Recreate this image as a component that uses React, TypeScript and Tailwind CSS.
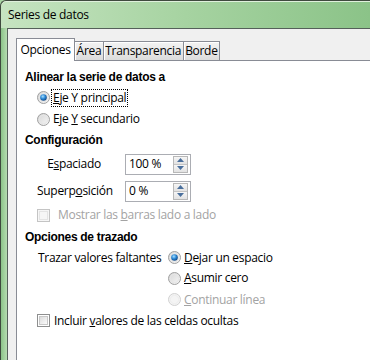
import React from 'react'

const font = { fontFamily: '"Open Sans", "Noto Sans", sans-serif' }
const bold = 'font-bold tracking-[-0.3px] font-["Liberation_Sans",Arial,sans-serif]'

function Radio ({ checked = false, disabled = false }: { checked?: boolean, disabled?: boolean }) {
  return (
    <svg width="13" height="13" viewBox="0 0 13 13" className="shrink-0">
      <defs>
        <linearGradient id="rf" x1="0" y1="0" x2="1" y2="1">
          <stop offset="0" stopColor="#d4d4d4" />
          <stop offset="1" stopColor="#f8f8f8" />
        </linearGradient>
        <radialGradient id="rd" cx="0.4" cy="0.35" r="0.7">
          <stop offset="0" stopColor="#a8e0ff" />
          <stop offset="0.5" stopColor="#2a87d5" />
          <stop offset="1" stopColor="#0f3f7a" />
        </radialGradient>
      </defs>
      <circle cx="6.5" cy="6.5" r="6" fill={disabled ? '#f4f4f4' : 'url(#rf)'} stroke={disabled ? '#d0d0d0' : '#a0a0a0'} />
      <circle cx="6.5" cy="6.5" r="4.2" fill="none" stroke={disabled ? '#eeeeee' : '#e6e6e6'} />
      {checked && <circle cx="6.5" cy="6.5" r="3.3" fill="url(#rd)" />}
    </svg>
  )
}

function Check ({ disabled = false }: { disabled?: boolean }) {
  return (
    <span className={`w-[13px] h-[13px] shrink-0 border ${disabled ? 'border-[#c4c4c4] bg-[#f6f6f6]' : 'border-[#8e8f8f] bg-white'} flex items-center justify-center`}>
      <span className={`w-[9px] h-[9px] border ${disabled ? 'border-[#e4e4e4]' : 'border-[#c8c8c8] bg-gradient-to-br from-[#dcdcdc] to-[#fbfbfb]'}`} />
    </span>
  )
}

function Spin ({ value }: { value: string }) {
  return (
    <div className="ml-[14px] w-[66px] h-[21px] border border-[#abadb3] bg-white flex items-center pl-[3px]">
      <span className="flex-1">{value}</span>
      <div className="mr-[2px] w-[15px] h-[17px] border border-[#b8b8b8] flex flex-col">
        <div className="flex-1 bg-gradient-to-b from-[#f6f6f6] to-[#e2e2e2] border-b border-[#c4c4c4] flex items-center justify-center">
          <svg width="7" height="4" viewBox="0 0 7 4"><path d="M0 4 L3.5 0 L7 4 Z" fill="#4a6f9c" /></svg>
        </div>
        <div className="flex-1 bg-gradient-to-b from-[#f6f6f6] to-[#e2e2e2] flex items-center justify-center">
          <svg width="7" height="4" viewBox="0 0 7 4"><path d="M0 0 L3.5 4 L7 0 Z" fill="#4a6f9c" /></svg>
        </div>
      </div>
    </div>
  )
}

function Tab ({ label, active = false }: { label: string, active?: boolean }) {
  if (active) {
    return (
      <div className="relative z-10 -mb-px h-[23px] px-[3.5px] bg-white border border-b-0 border-[#898c95] flex items-center">
        {label}
      </div>
    )
  }
  return (
    <div className="mt-[3px] h-[19px] px-[1.5px] bg-gradient-to-b from-[#f3f3f3] to-[#dcdcdc] border border-b-0 border-l-0 border-[#898c95] shadow-[inset_1px_1px_0_#ffffff] flex items-center">
      {label}
    </div>
  )
}

export default function App () {
  return (
    <div className="w-[370px] h-[360px] overflow-hidden flex flex-col bg-gradient-to-b from-[#a9d6a4] to-[#8cc489] text-[12px] leading-none text-black tracking-[-0.3px] whitespace-nowrap" style={font}>
      <div className="h-[28px] shrink-0 rounded-tl-[6px] border-t border-l border-[#3f4a3e] bg-gradient-to-r from-[#c6e4c1] via-[#a6d3a1] to-[#8bc388] flex items-center pl-[7px] shadow-[inset_0_1px_0_#dff0dc]">
        Series de datos
      </div>
      <div className="flex-1 flex">
        <div className="w-[7px] shrink-0 border-l border-[#3f4a3e] bg-gradient-to-r from-[#8cc489] to-[#b6dcb1]" />
        <div className="flex-1 flex flex-col bg-[#f0f0f0] border-l border-t border-[#55605a] pl-[8px] pt-[9px]">
          <div className="flex items-end">
            <Tab label="Opciones" active />
            <Tab label="Área" />
            <Tab label="Transparencia" />
            <Tab label="Borde" />
          </div>
          <div className="flex-1 bg-white border-t border-l border-[#898c95] pt-[6px] pl-[8px]">
            <div className={`h-[20px] flex items-center ${bold}`}>Alinear la serie de datos a</div>
            <div className="h-[21px] flex items-center ml-[12px]">
              <Radio checked />
              <span className="ml-[2px] px-[1px] py-[2px] outline-1 outline-dotted outline-black">
                <u>E</u>je Y principal
              </span>
            </div>
            <div className="h-[22px] flex items-center ml-[12px]">
              <Radio />
              <span className="ml-[3px]">Eje <u>Y</u> secundario</span>
            </div>
            <div className={`h-[20px] flex items-center ${bold}`}>Configuración</div>
            <div className="h-[28px] flex items-center ml-[12px]">
              <span className="w-[74px] text-center">E<u>s</u>paciado</span>
              <Spin value="100 %" />
            </div>
            <div className="h-[26px] flex items-center ml-[12px]">
              <span className="w-[74px] text-center">Superp<u>o</u>sición</span>
              <Spin value="0 %" />
            </div>
            <div className="h-[22px] flex items-center ml-[12px] text-[#a3a3a3]">
              <Check disabled />
              <span className="ml-[8px]">Mostrar las <u>b</u>arras lado a lado</span>
            </div>
            <div className={`h-[22px] flex items-center ${bold}`}>Opciones de trazado</div>
            <div className="h-[19px] flex items-center ml-[13px]">
              <span className="w-[130px]">Trazar valores faltantes</span>
              <Radio checked />
              <span className="ml-[3px]"><u>D</u>ejar un espacio</span>
            </div>
            <div className="h-[22px] flex items-center ml-[143px]">
              <Radio />
              <span className="ml-[3px]"><u>A</u>sumir cero</span>
            </div>
            <div className="h-[21px] flex items-center ml-[143px] text-[#a3a3a3]">
              <Radio disabled />
              <span className="ml-[3px]"><u>C</u>ontinuar línea</span>
            </div>
            <div className="h-[21px] flex items-center ml-[12px]">
              <Check />
              <span className="ml-[4px]">Incluir <u>v</u>alores de las celdas ocultas</span>
            </div>
          </div>
        </div>
      </div>
    </div>
  )
}
